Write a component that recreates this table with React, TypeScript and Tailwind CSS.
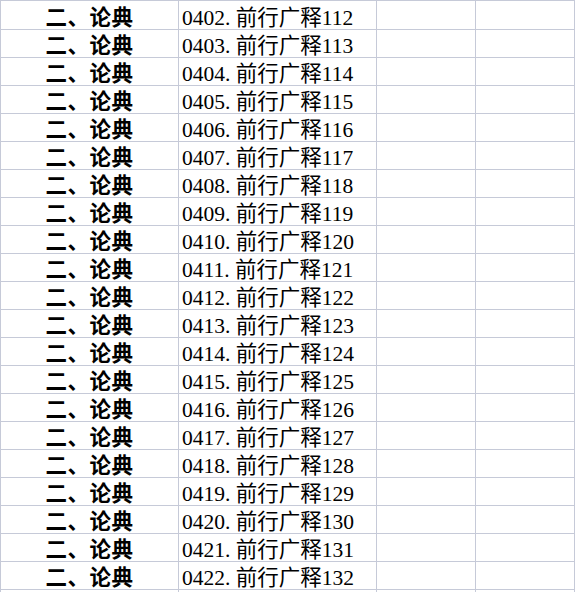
const rows = Array.from({ length: 21 }, (_, i) => ({
  code: String(402 + i).padStart(4, '0'),
  num: 112 + i,
}));

function Row({ code, num, first }: { code?: string; num?: number; first?: boolean }) {
  return (
    <div
      className={`flex border-b border-[#c6cad8] ${first ? 'h-[29px]' : 'h-[28px]'}`}
    >
      <div className="w-[178px] shrink-0 border-r border-[#c6cad8] flex items-end justify-center">
        {code && <span className="font-bold leading-[22px] tracking-[0.5px]">二、论典</span>}
      </div>
      <div className="w-[198px] shrink-0 border-r border-[#c6cad8] flex items-end pl-[3px]">
        {code && (
          <span className="leading-[22px] whitespace-nowrap">
            {code}
            <span className="inline-block w-[0.5em]">.</span>
            前行广释{num}
          </span>
        )}
      </div>
      <div className="w-[99px] shrink-0 border-r border-[#c6cad8]" />
      <div className="w-[99px] shrink-0 border-r border-[#c6cad8]" />
    </div>
  );
}

export default function App() {
  return (
    <div className="w-[577px] h-[592px] overflow-hidden bg-white text-black text-[21.5px] font-['Liberation_Serif','Noto_Sans_CJK_SC',serif]">
      <div className="border-t border-l border-[#c6cad8] w-[575px]">
        {rows.map((r, i) => (
          <Row key={r.code} code={r.code} num={r.num} first={i === 0} />
        ))}
        <Row />
      </div>
    </div>
  );
}
